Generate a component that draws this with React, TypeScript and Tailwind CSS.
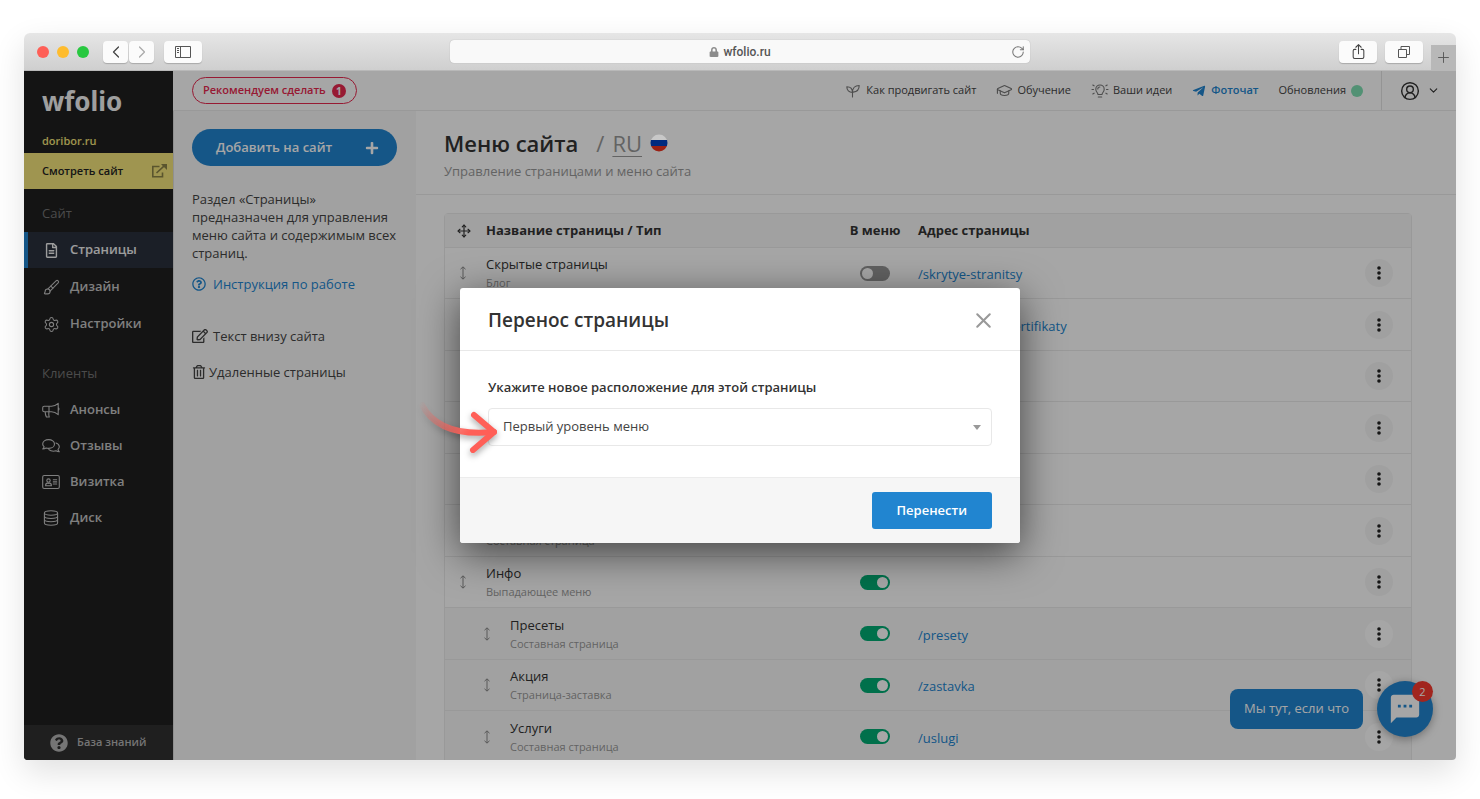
import type { ReactNode } from 'react';
import { Brush, ChevronDown, ChevronLeft, ChevronRight, CircleUserRound, GraduationCap, Move, Plus, RotateCw, Settings, X } from 'lucide-react';
import { FaLock, FaPlus, FaQuestionCircle, FaRegEdit, FaRegFileAlt, FaRegQuestionCircle, FaRegTrashAlt, FaTelegramPlane } from 'react-icons/fa';
import { IoShareOutline } from 'react-icons/io5';
import { MdTextsms } from 'react-icons/md';

type PageRow = {
  id: number;
  name: string;
  type: string;
  url?: string;
  inMenu: boolean;
  child?: boolean;
};

const pages: PageRow[] = [
  { id: 1, name: 'Скрытые страницы', type: 'Блог', url: '/skrytye-stranitsy', inMenu: false },
  { id: 2, name: '', type: '', url: '/podarochnye-sertifikaty', inMenu: true },
  { id: 3, name: '', type: '', inMenu: true },
  { id: 4, name: '', type: '', inMenu: true },
  { id: 5, name: '', type: '', inMenu: true },
  { id: 6, name: '', type: 'Составная страница', inMenu: true },
  { id: 7, name: 'Инфо', type: 'Выпадающее меню', inMenu: true },
  { id: 8, name: 'Пресеты', type: 'Составная страница', url: '/presety', inMenu: true, child: true },
  { id: 9, name: 'Акция', type: 'Страница-заставка', url: '/zastavka', inMenu: true, child: true },
  { id: 10, name: 'Услуги', type: 'Составная страница', url: '/uslugi', inMenu: true, child: true },
];

function LineIcon({ children, box = '0 0 18 16', className = 'w-[18px] h-4' }: { children: ReactNode; box?: string; className?: string }) {
  return (
    <svg viewBox={box} className={className} fill="none" stroke="currentColor" strokeWidth="1.1" strokeLinecap="round" strokeLinejoin="round" aria-hidden="true">
      {children}
    </svg>
  );
}

const BullhornIcon = () => (
  <LineIcon>
    <path d="M9.5 4.2H2.2A1.5 1.5 0 0 0 .7 5.7v2.6a1.5 1.5 0 0 0 1.5 1.5h7.3M9.5 4.2c2.4 0 4.8-1.2 6.7-2.9v11.4c-1.9-1.7-4.3-2.9-6.7-2.9M7 4.2v5.6M16.2 5.6c1 .3 1 2.5 0 2.8M3.2 9.8c0 1.9.4 3.7 1.2 5.2h2.9c-.9-1.4-.6-3.2-.4-5.2" />
  </LineIcon>
);

const CommentsIcon = () => (
  <LineIcon>
    <path d="M6.6 1.6c3.3 0 5.9 1.9 5.9 4.4s-2.6 4.4-5.9 4.4c-.9 0-1.8-.1-2.5-.4-.9.6-2 1-3.3 1 .7-.7 1.2-1.5 1.3-2.4C1.2 7.9.7 7 .7 6c0-2.5 2.6-4.4 5.9-4.4z" />
    <path d="M14 5c2 .7 3.3 2.1 3.3 3.8 0 1-.5 1.9-1.3 2.6.1.9.6 1.7 1.3 2.4-1.3 0-2.4-.4-3.3-1-.8.3-1.6.4-2.5.4-1.9 0-3.5-.6-4.6-1.6" />
  </LineIcon>
);

const IdCardIcon = () => (
  <LineIcon>
    <rect x=".7" y="1.5" width="16.6" height="13" rx="1.5" />
    <circle cx="6.5" cy="6.6" r="1.7" />
    <path d="M3.6 11.8c0-1.5.8-2.7 1.9-2.7.6.3 1.4.3 2 0 1.1 0 1.9 1.2 1.9 2.7zM11.3 5.8h3.4M11.3 7.9h3.4M11.3 10h3.4" />
  </LineIcon>
);

const DiskIcon = () => (
  <LineIcon>
    <ellipse cx="9" cy="3" rx="6.6" ry="2.2" />
    <path d="M2.4 3v10c0 1.2 3 2.2 6.6 2.2s6.6-1 6.6-2.2V3M2.4 6.3c0 1.2 3 2.2 6.6 2.2s6.6-1 6.6-2.2M2.4 9.6c0 1.2 3 2.2 6.6 2.2s6.6-1 6.6-2.2" />
  </LineIcon>
);

const SproutIcon = () => (
  <LineIcon box="0 0 14 14" className="w-[14px] h-[14px]">
    <path d="M6.5 13V8.5C3 8.5.8 6.2.8 2.8c3.4 0 5.7 2 5.7 5.7 0-4.3 2.3-7 6.7-7 0 3.9-2 6.3-6 6.6" />
  </LineIcon>
);

const BulbIcon = () => (
  <LineIcon>
    <path d="M7 11.5c0-1.7-2.2-2.6-2.2-5.3a4.2 4.2 0 0 1 8.4 0c0 2.7-2.2 3.6-2.2 5.3zM7.3 14h3.4M6.8 6c0-1.2.8-2 2-2M1 6.5h1.5M15.5 6.5H17M1.8 2l1.3.8M16.2 2l-1.3.8M1.8 11l1.3-.8M16.2 11l-1.3-.8" />
  </LineIcon>
);

const OpenIcon = () => (
  <svg viewBox="0 0 16 14" className="w-4 h-[14px] text-[#8b8347]" fill="none" stroke="currentColor" strokeWidth="1.6" aria-hidden="true">
    <path d="M8.5 2.5H1.8v10.2h9.7V8.5M5.5 9 14 1.2" />
    <path d="M10 0h6v6l-2-2-2.2-2z" fill="currentColor" stroke="none" />
  </svg>
);

const DragIcon = () => (
  <svg viewBox="0 0 8 14" className="w-2 h-[14px] shrink-0 text-[#888]" fill="none" stroke="currentColor" aria-hidden="true">
    <path d="M4 1v12M1.5 3.2 4 .8l2.5 2.4M1.5 10.8 4 13.2l2.5-2.4" />
  </svg>
);

const clientLinks = [
  { label: 'Анонсы', icon: <BullhornIcon /> },
  { label: 'Отзывы', icon: <CommentsIcon /> },
  { label: 'Визитка', icon: <IdCardIcon /> },
  { label: 'Диск', icon: <DiskIcon /> },
];

function SideLink({ icon, label, active }: { icon: ReactNode; label: string; active?: boolean }) {
  return (
    <a
      href="#"
      className={`flex items-center h-9 pl-[14px] border-l-4 text-[13px] font-semibold ${active ? 'border-[#2185d0] bg-[#2a313d] text-[#f0f0f0]' : 'border-transparent text-[#c4c4c4]'}`}
    >
      <span className="w-[28px] flex">
        <span className="w-[18px] flex justify-center">{icon}</span>
      </span>
      {label}
    </a>
  );
}

function BrowserBar() {
  const button = 'h-[22px] flex items-center justify-center rounded bg-[#fbfbfb] shadow-[0_1px_1px_rgba(0,0,0,0.2)]';
  return (
    <div className="grid grid-cols-[1fr_580px_1fr] items-center h-[38px] bg-linear-to-b from-[#e6e6e6] to-[#cfcfcf] border-b border-[#b8b8b8] shrink-0">
      <div className="flex items-center pl-[13px]">
        <div className="flex gap-2">
          <span className="w-3 h-3 rounded-full bg-[#fe5f57]" />
          <span className="w-3 h-3 rounded-full bg-[#febc2e]" />
          <span className="w-3 h-3 rounded-full bg-[#28c840]" />
        </div>
        <div className="flex gap-px ml-[14px]">
          <button aria-label="Назад" className={`${button} w-[25px] text-[#444]`}><ChevronLeft size={20} strokeWidth={1.5} /></button>
          <button aria-label="Вперед" className={`${button} w-[25px] text-[#aaa]`}><ChevronRight size={20} strokeWidth={1.5} /></button>
        </div>
        <button aria-label="Боковая панель" className={`${button} w-[38px] ml-[10px] text-[#555]`}>
          <svg viewBox="0 0 16 12" className="w-4 h-3" fill="none" stroke="currentColor">
            <path d="M.5.5h15v11H.5zM5.5.5v11M2 2.5h2M2 4.5h2M2 6.5h2" />
          </svg>
        </button>
      </div>
      <div className="relative flex items-center justify-center gap-1 h-[23px] rounded bg-[#f9f9f9] text-[#555] shadow-[0_0_1px_rgba(0,0,0,0.3)]">
        <FaLock size={10} className="text-[#8c8c8c]" />
        <span className="font-['Roboto',sans-serif] text-xs font-medium">wfolio.ru</span>
        <button aria-label="Обновить" className="absolute right-[5px] top-[5px] text-[#777]"><RotateCw size={14} strokeWidth={1.8} /></button>
      </div>
      <div className="flex items-center justify-end gap-2 self-stretch">
        <button aria-label="Поделиться" className={`${button} w-[38px] text-[#444]`}><IoShareOutline size={17} /></button>
        <button aria-label="Вкладки" className={`${button} w-[38px] text-[#555]`}>
          <svg viewBox="0 0 14 14" className="w-[14px] h-[14px]" fill="none" stroke="currentColor">
            <path d="M1.5 4.5h8v8h-8zM4 4.5v-3h8.5v8h-3" />
          </svg>
        </button>
        <button aria-label="Новая вкладка" className="w-[25px] h-[25px] self-end flex items-center justify-center bg-[#b8b8b8] text-[#555]"><Plus size={17} strokeWidth={1.3} /></button>
      </div>
    </div>
  );
}

function Sidebar() {
  return (
    <aside className="w-[149px] shrink-0 flex flex-col bg-[#1f1f1f]">
      <div className="pl-[18px] h-[82px] flex flex-col justify-between pb-1 pt-3">
        <span className="font-['Noto_Sans',sans-serif] font-bold text-[26px] leading-[36px] text-[#f5f5f5]">wfolio</span>
        <a href="#" className="text-[11px] leading-4 font-semibold text-[#f4e57b]">doribor.ru</a>
      </div>
      <a href="#" className="h-9 shrink-0 pl-[18px] pr-[6px] flex items-center justify-between bg-[#f4e57b] text-[11px] font-semibold text-[#222]">
        Смотреть сайт
        <OpenIcon />
      </a>
      <h2 className="pl-[18px] mt-[14px] mb-[9px] text-[13px] leading-5 text-[#747474]">Сайт</h2>
      <nav className="flex flex-col gap-px">
        <SideLink icon={<FaRegFileAlt size={15} />} label="Страницы" active />
        <SideLink icon={<Brush size={17} strokeWidth={1.5} />} label="Дизайн" />
        <SideLink icon={<Settings size={17} strokeWidth={1.5} />} label="Настройки" />
      </nav>
      <h2 className="pl-[18px] mt-[21px] mb-[9px] text-[13px] leading-5 text-[#747474]">Клиенты</h2>
      <nav>
        {clientLinks.map(l => <SideLink key={l.label} icon={l.icon} label={l.label} />)}
      </nav>
      <a href="#" className="mt-auto h-[35px] shrink-0 flex items-center gap-[9px] pl-[26px] bg-[#313131] text-[11px] font-semibold text-[#b4b4b4]">
        <FaQuestionCircle size={18} />
        База знаний
      </a>
    </aside>
  );
}

function TopBar() {
  return (
    <header className="flex items-center justify-between h-[40px] shrink-0 border-b border-[#ececec] pl-[19px] text-[11px] text-[#444]">
      <button className="flex items-center gap-[6px] h-[27px] px-[10px] border border-[#e8294f] rounded-full font-semibold text-[#e8294f]">
        Рекомендуем сделать
        <span className="w-[14px] h-[14px] rounded-full bg-[#e8294f] text-white text-[10px] leading-[14px] font-bold">1</span>
      </button>
      <div className="flex items-center self-stretch">
        <nav className="flex items-center gap-5 pr-[18px]">
          <a href="#" className="flex items-center gap-[6px]"><span className="text-[#777]"><SproutIcon /></span> Как продвигать сайт</a>
          <a href="#" className="flex items-center gap-1"><GraduationCap size={17} strokeWidth={1.6} className="-scale-x-100 text-[#777]" /> Обучение</a>
          <a href="#" className="flex items-center gap-1"><span className="text-[#777]"><BulbIcon /></span> Ваши идеи</a>
          <a href="#" className="flex items-center gap-[5px] font-semibold text-[#2185d0]"><FaTelegramPlane size={14} /> Фоточат</a>
          <a href="#" className="flex items-center gap-[5px]">
            Обновления
            <span className="w-[12px] h-[12px] rounded-full bg-[#7fdfb2]" />
          </a>
        </nav>
        <button aria-label="Профиль" className="flex items-center gap-[7px] self-stretch pl-[18px] pr-4 border-l border-[#e4e4e4] text-[#333]">
          <CircleUserRound size={20} strokeWidth={1.7} />
          <ChevronDown size={13} />
        </button>
      </div>
    </header>
  );
}

function HelpPanel() {
  return (
    <section className="w-[243px] shrink-0 border-l border-[#ddd] bg-[#f8f8f8] pl-[18px] pr-[19px] pt-[18px] text-[13px] text-[#444]">
      <button className="w-full h-[37px] pl-6 pr-[18px] rounded-full flex items-center justify-between bg-[#2185d0] text-white font-semibold">
        Добавить на сайт
        <FaPlus size={14} />
      </button>
      <p className="mt-6 leading-[18px] whitespace-nowrap">
        Раздел «Страницы»<br />
        предназначен для управления<br />
        меню сайта и содержимым всех<br />
        страниц.
      </p>
      <a href="#" className="mt-3 flex items-center gap-[7px] leading-5 text-[#2185d0]"><FaRegQuestionCircle size={14} /> Инструкция по работе</a>
      <a href="#" className="mt-8 flex items-center gap-[5px] leading-5"><FaRegEdit size={16} /> Текст внизу сайта</a>
      <a href="#" className="mt-4 flex items-center gap-[3px] leading-5"><FaRegTrashAlt size={14} /> Удаленные страницы</a>
    </section>
  );
}

function PagesTable() {
  return (
    <table className="w-full table-fixed border-separate border-spacing-0 border border-[#ececec] rounded-sm text-[13px] text-[#333]">
      <thead>
        <tr className="h-[34px] bg-[#f8f8f8] text-left font-bold">
          <th className="w-[41%] border-b border-[#ececec]">
            <span className="flex items-center pl-3 gap-[15px]"><Move size={14} strokeWidth={2} /> Название страницы / Тип</span>
          </th>
          <th className="w-[68px] border-b border-[#ececec] text-center whitespace-nowrap">В меню</th>
          <th className="border-b border-[#ececec] pl-[9px]">Адрес страницы</th>
          <th className="w-[65px] border-b border-[#ececec]" />
        </tr>
      </thead>
      <tbody>
        {pages.map(page => (
          <tr key={page.id} className={`odd:h-[51px] even:h-[52px] ${page.child ? 'bg-[#f8f8f8]' : ''}`}>
            <td className="border-b border-[#ececec]">
              <div className={`flex items-center gap-[19px] ${page.child ? 'pl-[38px]' : 'pl-[14px]'}`}>
                <DragIcon />
                <div>
                  <p className="h-5 leading-5">{page.name}</p>
                  <p className="h-[18px] text-[11px] leading-[18px] text-[#999]">{page.type}</p>
                </div>
              </div>
            </td>
            <td className="border-b border-[#ececec]">
              <input
                type="checkbox"
                aria-label={`В меню: ${page.name}`}
                defaultChecked={page.inMenu}
                className="block mx-auto appearance-none w-[30px] h-[15px] rounded-full bg-[#959595] p-[2px] before:block before:w-[11px] before:h-[11px] before:rounded-full before:bg-white checked:bg-[#00ac74] checked:before:ml-[15px]"
              />
            </td>
            <td className="border-b border-[#ececec] pl-[9px] pt-1">
              {page.url && <a href="#" className="text-[#2185d0]">{page.url}</a>}
            </td>
            <td className="border-b border-[#ececec]">
              <button aria-label="Действия" className={`mx-auto w-7 h-7 rounded-full flex items-center justify-center ${page.child ? 'bg-white' : 'bg-[#f6f6f6]'}`}>
                <svg viewBox="0 0 4 14" className="w-1 h-[14px]" fill="#222">
                  <circle cx="2" cy="2" r="1.8" />
                  <circle cx="2" cy="7" r="1.8" />
                  <circle cx="2" cy="12" r="1.8" />
                </svg>
              </button>
            </td>
          </tr>
        ))}
      </tbody>
    </table>
  );
}

function ChatWidget() {
  return (
    <div className="absolute right-[23px] bottom-[23px] flex items-center gap-[14px]">
      <span className="h-10 px-[14px] flex items-center rounded-lg bg-[#2185d0] text-[13px] text-white">Мы тут, если что</span>
      <button aria-label="Открыть чат" className="relative w-14 h-14 rounded-full flex items-center justify-center bg-[#2185d0] text-white shadow-[0_2px_10px_rgba(0,0,0,0.35)]">
        <MdTextsms size={34} />
        <span className="absolute right-0 top-0 w-[21px] h-[21px] rounded-full bg-[#f83a2e] text-[11px] leading-[21px]">2</span>
      </button>
    </div>
  );
}

function MoveDialog() {
  return (
    <div role="dialog" aria-labelledby="move-title" className="relative w-[560px] rounded-[3px] bg-white shadow-[0_10px_40px_rgba(0,0,0,0.6)]">
      <div className="flex items-center justify-between h-[63px] px-7 pt-[2px] border-b border-[#e8e8e8]">
        <h2 id="move-title" className="text-[19px] font-semibold text-[#333]">Перенос страницы</h2>
        <button aria-label="Закрыть" className="-mr-1 text-[#999]"><X size={25} /></button>
      </div>
      <div className="px-7 pt-[26px] pb-[31px]">
        <label htmlFor="target" className="block text-[13px] leading-5 font-semibold text-[#333]">Укажите новое расположение для этой страницы</label>
        <div className="relative mt-[11px]">
          <select id="target" className="appearance-none w-full h-[38px] px-[14px] border border-[#e8e8e8] rounded bg-white text-[13px] text-[#444]">
            <option>Первый уровень меню</option>
          </select>
          <svg viewBox="0 0 8 5" className="absolute right-[11px] top-[17px] w-2 h-[5px] pointer-events-none" fill="#999">
            <path d="M0 0h8L4 5z" />
          </svg>
        </div>
      </div>
      <div className="flex items-center justify-end h-[66px] px-7 border-t border-[#ececec] rounded-b-[3px] bg-[#f6f6f6]">
        <button className="h-[37px] px-[25px] rounded-[3px] bg-[#2185d0] text-[13px] font-semibold text-white">Перенести</button>
      </div>
      {/* pointer to the select */}
      <svg viewBox="0 0 100 80" className="absolute -left-[50px] top-[102px] w-[100px] h-20 pointer-events-none drop-shadow-[0_3px_3px_rgba(0,0,0,0.35)]" fill="none" strokeLinecap="round" strokeLinejoin="round">
        <defs>
          <linearGradient id="tail" gradientUnits="userSpaceOnUse" x1="10" y1="12" x2="60" y2="40">
            <stop offset="0" stopColor="#ff5f57" stopOpacity="0" />
            <stop offset="1" stopColor="#ff5f57" />
          </linearGradient>
        </defs>
        <path d="M12 15C22 34 44 46 84 42" stroke="url(#tail)" strokeWidth="6" />
        <path d="M64 25 84 42 63 60" stroke="#ff5f57" strokeWidth="6" />
      </svg>
    </div>
  );
}

export default function App() {
  return (
    <div className="h-screen px-6 pt-[33px] pb-[39px] bg-white font-['Open_Sans','Noto_Sans',sans-serif]">
      <div className="h-full flex flex-col rounded-t-md rounded-b-sm overflow-hidden shadow-[0_12px_32px_rgba(0,0,0,0.12)]">
        <BrowserBar />
        <div className="relative flex flex-1 min-h-0 overflow-hidden bg-white">
          <Sidebar />
          <div className="flex-1 min-w-0 flex flex-col">
            <TopBar />
            <div className="flex flex-1 min-h-0">
              <HelpPanel />
              <main className="flex-1 min-w-0 overflow-hidden">
                <div className="h-[84px] pl-7 pt-4 border-b border-[#ececec]">
                  <h1 className="flex items-center text-[22px] leading-8 font-semibold text-[#333]">
                    Меню сайта
                    <span className="ml-[18px] mr-2 font-normal text-[#999]">/</span>
                    <a href="#" className="font-normal text-[#999] underline decoration-1 underline-offset-4">RU</a>
                    <svg viewBox="0 0 18 18" className="relative z-20 ml-2 w-[18px] h-[18px]" aria-hidden="true">
                      <clipPath id="flag"><circle cx="9" cy="9" r="8.5" /></clipPath>
                      <g clipPath="url(#flag)">
                        <path fill="#c8c8c8" d="M0 0h18v6H0z" />
                        <path fill="#002a7f" d="M0 6h18v6H0z" />
                        <path fill="#9a2013" d="M0 12h18v6H0z" />
                      </g>
                    </svg>
                  </h1>
                  <p className="mt-[2px] text-[13px] leading-5 text-[#999]">Управление страницами и меню сайта</p>
                </div>
                <div className="pl-7 pr-11 pt-[18px]">
                  <PagesTable />
                </div>
              </main>
            </div>
          </div>
          <ChatWidget />
          <div className="absolute inset-0 z-10 flex items-center justify-center bg-black/35">
            <MoveDialog />
          </div>
        </div>
      </div>
    </div>
  );
}
